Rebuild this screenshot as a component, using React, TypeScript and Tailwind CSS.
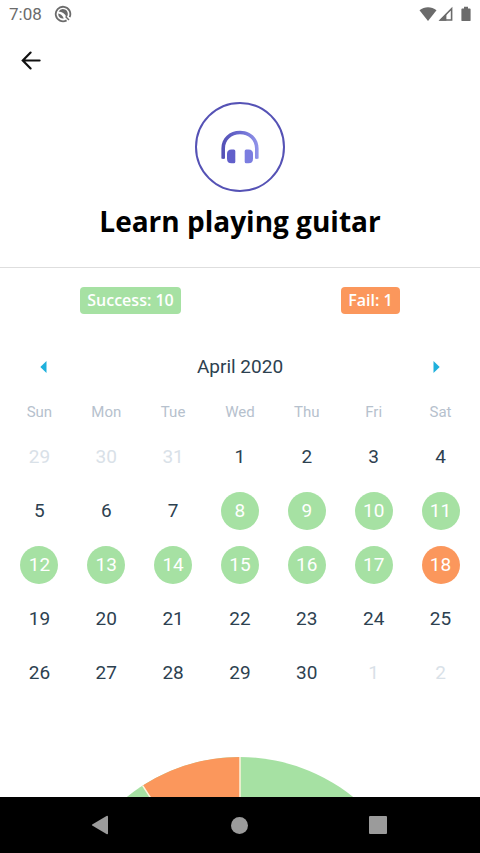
import clsx from "clsx";

type Status = "success" | "fail" | "none" | "outside";

interface Day {
  day: number;
  status: Status;
}

const WEEKDAYS = ["Sun", "Mon", "Tue", "Wed", "Thu", "Fri", "Sat"];

const DAY_STYLES: Record<Status, string> = {
  success: "bg-[#a6e1a3] text-white",
  fail: "bg-[#fb975c] text-white",
  none: "text-[#2d4150]",
  outside: "text-[#d9e1e8]",
};

function statusOf(day: number): Status {
  if (day >= 8 && day <= 17) return "success";
  if (day === 18) return "fail";
  return "none";
}

const DAYS: Day[] = [
  ...[29, 30, 31].map((day): Day => ({ day, status: "outside" })),
  ...Array.from({ length: 30 }, (_, i): Day => ({ day: i + 1, status: statusOf(i + 1) })),
  ...[1, 2].map((day): Day => ({ day, status: "outside" })),
];

const WEEKS = [0, 1, 2, 3, 4].map((w) => DAYS.slice(w * 7, w * 7 + 7));

const successCount = DAYS.filter((d) => d.status === "success").length;
const failCount = DAYS.filter((d) => d.status === "fail").length;

function StatusBar() {
  return (
    <div className="flex h-7 shrink-0 items-center justify-between pl-[9px] pr-2 text-[#6b6b6b]">
      <div className="flex items-center gap-3">
        <span className="text-[17px] leading-7">7:08</span>
        <svg className="h-[18px] w-[18px]" viewBox="0 0 18 18" fill="none" aria-hidden="true">
          <path
            d="M12.6 15.4A7.3 7.3 0 1 1 15.6 12.2"
            stroke="currentColor"
            strokeWidth="1.8"
          />
          <path d="M4.6 6.6A4.9 4.9 0 0 1 13.8 8.8C13.8 10.6 13.2 11.6 12.6 12.2C11 8.6 8 6.8 4.6 6.6Z" fill="currentColor" />
          <path d="M4.2 8.6C6.6 9 8.6 10.6 9.8 13.4A4.6 4.6 0 0 1 4.2 8.6Z" fill="currentColor" />
          <path d="M11.6 11.4L15 15" stroke="currentColor" strokeWidth="1.4" />
        </svg>
      </div>
      <div className="flex items-center">
        <svg className="h-4 w-[18px]" viewBox="0 0 18 16" aria-hidden="true">
          <path d="M0.5 4.2C5.5 0.3 12.5 0.3 17.5 4.2L9 15Z" fill="currentColor" />
        </svg>
        <svg className="ml-px h-4 w-4" viewBox="0 0 16 16" aria-hidden="true">
          <path d="M2.4 14L13.6 2.6V14Z" fill="none" stroke="currentColor" strokeWidth="1.6" />
          <path d="M1 14.8L8.4 7.4V14.8Z" fill="currentColor" />
        </svg>
        <svg className="ml-1.5 h-4 w-3" viewBox="0 0 12 16" aria-hidden="true">
          <path
            d="M4 0.8H8V2.4H9.7Q10.6 2.4 10.6 3.3V14.2Q10.6 15.1 9.7 15.1H2.3Q1.4 15.1 1.4 14.2V3.3Q1.4 2.4 2.3 2.4H4Z"
            fill="currentColor"
          />
        </svg>
      </div>
    </div>
  );
}

function HeadphonesBadge() {
  return (
    <div className="flex h-[90px] w-[90px] items-center justify-center rounded-full border-2 border-[#5552b5]">
      <svg className="h-10 w-10" viewBox="0 0 40 40" aria-hidden="true">
        <defs>
          <linearGradient id="headphones" x1="0" y1="0" x2="1" y2="0">
            <stop offset="0" stopColor="#5350b4" />
            <stop offset="0.5" stopColor="#6b6bd0" />
            <stop offset="1" stopColor="#9295ea" />
          </linearGradient>
        </defs>
        <path
          d="M1.4 31.5V21.5C1.4 11 9.5 3.8 20 3.8S38.6 11 38.6 21.5V31.5Q36.8 32.4 35 31.5V21.5C35 13 28.5 7.3 20 7.3S5 13 5 21.5V31.5Q3.2 32.4 1.4 31.5Z"
          fill="url(#headphones)"
        />
        <path d="M11.5 22.5H13.8Q15.3 22.5 15.3 24V34.8Q15.3 36.3 13.8 36.3H11.5Q7 36.3 7 31.8V27Q7 22.5 11.5 22.5Z" fill="#615fca" />
        <path d="M26.2 22.5H28.5Q33 22.5 33 27V31.8Q33 36.3 28.5 36.3H26.2Q24.7 36.3 24.7 34.8V24Q24.7 22.5 26.2 22.5Z" fill="#7b7de0" />
      </svg>
    </div>
  );
}

function Calendar() {
  return (
    <section className="px-1.5">
      <div className="flex h-[42px] items-center justify-between px-[17px]">
        <button type="button" aria-label="Previous month" className="flex h-10 w-10 items-center justify-center">
          <svg className="h-3 w-[7px]" viewBox="0 0 7 12" aria-hidden="true">
            <path d="M6.5 0V12L0.3 6Z" fill="#1fb0dc" />
          </svg>
        </button>
        <h2 className="text-[19px] leading-6 text-[#2d4150]">April 2020</h2>
        <button type="button" aria-label="Next month" className="flex h-10 w-10 items-center justify-center">
          <svg className="h-3 w-[7px]" viewBox="0 0 7 12" aria-hidden="true">
            <path d="M0.5 0V12L6.7 6Z" fill="#1fb0dc" />
          </svg>
        </button>
      </div>

      <table className="mt-1.5 w-full table-fixed text-center">
        <thead>
          <tr className="h-9">
            {WEEKDAYS.map((name) => (
              <th key={name} scope="col" className="p-0 text-center text-[15px] font-normal text-[#b6c1cd]">
                {name}
              </th>
            ))}
          </tr>
        </thead>
        <tbody>
          {WEEKS.map((week, i) => (
            <tr key={i} className="h-[54px]">
              {week.map(({ day, status }) => (
                <td key={day} className="p-0">
                  <button
                    type="button"
                    className={clsx(
                      "mx-auto flex h-[38px] w-[38px] items-center justify-center rounded-full text-[19px]",
                      DAY_STYLES[status],
                    )}
                  >
                    {day}
                  </button>
                </td>
              ))}
            </tr>
          ))}
        </tbody>
      </table>
    </section>
  );
}

function PieChart() {
  const angle = (failCount / (failCount + successCount)) * 2 * Math.PI;
  const x = 180 - 180 * Math.sin(angle);
  const y = 180 - 180 * Math.cos(angle);

  return (
    <svg className="mx-auto mt-[57px] block h-[360px] w-[360px]" viewBox="0 0 360 360" aria-hidden="true">
      <circle cx="180" cy="180" r="180" fill="#a6e1a3" />
      <path d={`M180 180L${x} ${y}A180 180 0 0 1 180 0Z`} fill="#fb975c" />
      <path d={`M${x} ${y}L180 180V0`} fill="none" stroke="#fdf3dc" strokeWidth="1.5" />
    </svg>
  );
}

function NavBar() {
  return (
    <nav className="flex h-14 shrink-0 items-center justify-between bg-black pl-20 pr-[82px] text-[#9b9b9b]">
      <button type="button" aria-label="Back" className="flex h-10 w-10 items-center justify-center">
        <svg className="h-5 w-5" viewBox="0 0 20 20" aria-hidden="true">
          <path d="M2.2 10.6Q1.6 10 2.2 9.4L16.5 1Q18 0.4 18 1.6V18.4Q18 19.6 16.5 19Z" fill="currentColor" />
        </svg>
      </button>
      <button type="button" aria-label="Home" className="flex h-10 w-10 items-center justify-center">
        <span className="h-[17px] w-[17px] rounded-full bg-current" />
      </button>
      <button type="button" aria-label="Recent apps" className="flex h-10 w-10 items-center justify-center">
        <span className="h-[18px] w-[18px] rounded-[1px] bg-current" />
      </button>
    </nav>
  );
}

export default function App() {
  return (
    <div className="flex h-screen flex-col bg-white font-['Roboto',sans-serif]">
      <StatusBar />
      <main className="min-h-0 flex-1 overflow-y-auto [scrollbar-width:none]">
        <header className="flex flex-col items-center border-b border-[#dedede] pb-[26px] font-['Open_Sans',sans-serif]">
          <button
            type="button"
            aria-label="Go back"
            className="ml-[11px] mt-3 flex h-10 w-10 items-center justify-center self-start"
          >
            <svg className="h-5 w-5" viewBox="0 0 20 20" fill="none" aria-hidden="true">
              <path
                d="M18.6 10.5H2M9.6 2.6L1.8 10.5L9.6 18.4"
                stroke="#111"
                strokeWidth="2.2"
                strokeLinecap="round"
              />
            </svg>
          </button>
          <div className="mt-[22px]">
            <HeadphonesBadge />
          </div>
          <h1 className="mt-[9px] text-[28px] font-bold leading-10 text-black">Learn playing guitar</h1>
        </header>

        <div className="flex justify-around pt-[19px] font-['Open_Sans',sans-serif] text-base font-semibold text-white">
          <span className="rounded bg-[#a6e1a3] px-[7px] leading-[27px]">Success: {successCount}</span>
          <span className="rounded bg-[#fb975c] px-[7px] leading-[27px]">Fail: {failCount}</span>
        </div>

        <div className="mt-8">
          <Calendar />
        </div>
        <PieChart />
      </main>
      <NavBar />
    </div>
  );
}
